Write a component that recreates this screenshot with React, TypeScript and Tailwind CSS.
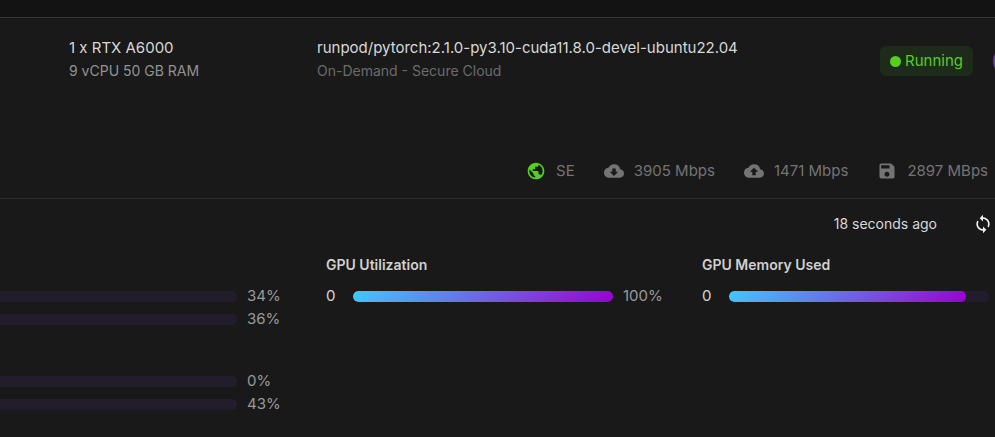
import { ReactNode } from "react";
import { MdCloudDownload, MdCloudUpload, MdPublic, MdSave, MdSync } from "react-icons/md";

const network = [
  { id: "region", label: "SE", icon: <MdPublic className="size-5 text-[#54cf22]" /> },
  { id: "down", label: "3905 Mbps", icon: <MdCloudDownload className="size-5" /> },
  { id: "up", label: "1471 Mbps", icon: <MdCloudUpload className="size-5" /> },
  { id: "disk", label: "2897 MBps", icon: <MdSave className="size-5" /> },
];

const systemUsage = [
  [
    { id: "cpu", label: "34%" },
    { id: "memory", label: "36%" },
  ],
  [
    { id: "disk", label: "0%" },
    { id: "volume", label: "43%" },
  ],
];

function Meter({ value, name }: { value: number; name: string }) {
  return (
    <div
      role="meter"
      aria-label={name}
      aria-valuenow={value}
      aria-valuemin={0}
      aria-valuemax={100}
      className="h-[11px] flex-1 overflow-hidden rounded-[5px] bg-[#221d2b]"
    >
      <div
        className="h-full rounded-[5px] bg-[linear-gradient(135deg,#40c9ff,#9a00cf)]"
        style={{ width: `${value}%` }}
      />
    </div>
  );
}

function GpuMetric({ title, children }: { title: string; children: ReactNode }) {
  return (
    <section>
      <h3 className="text-sm leading-5 font-semibold text-[#d0d0d0]">{title}</h3>
      <div className="mt-[9px] flex h-[25px] items-center">{children}</div>
    </section>
  );
}

export default function App() {
  return (
    <main className="min-h-screen overflow-hidden bg-[#191919] font-['Inter',sans-serif] text-[#d8d8d8]">
      <div className="h-[18px] border-b border-[#333333] bg-[#131313]" />

      <header className="flex h-[86px] items-center">
        <div className="w-[317px] pb-1 pl-[69px]">
          <p className="text-[15px] leading-6">1 x RTX A6000</p>
          <p className="text-sm leading-[22px] text-[#929292]">9 vCPU 50 GB RAM</p>
        </div>
        <div className="flex-1 pb-1">
          <p className="text-[15px] leading-6">runpod/pytorch:2.1.0-py3.10-cuda11.8.0-devel-ubuntu22.04</p>
          <p className="text-sm leading-[22px] text-[#6b6b6b]">On-Demand - Secure Cloud</p>
        </div>
        <span className="flex h-[30px] items-center gap-1 rounded-md bg-[#1f2b1a] px-2.5 text-[#54cf22]">
          <span className="size-[11px] rounded-full bg-[#54cf22]" />
          <span className="text-[15px]">Running</span>
        </span>
        <button
          type="button"
          aria-label="Open pod"
          className="-mr-7 ml-5 size-[30px] rounded-full border-2 border-[#673ab7]"
        />
      </header>

      <ul className="mt-[47px] flex h-12 items-start justify-end gap-[29px] border-b border-[#2d2d2d] pt-2.5 pr-[7px] text-[15px] leading-5 text-[#747474]">
        {network.map((item) => (
          <li key={item.id} className="flex items-center gap-2.5">
            {item.icon}
            {item.label}
          </li>
        ))}
      </ul>

      <div className="flex items-center justify-end gap-9 pt-[15px] pr-0.5">
        <time className="text-sm leading-5">18 seconds ago</time>
        <button type="button" aria-label="Refresh" className="text-[#f0f0f0]">
          <MdSync className="size-5" />
        </button>
      </div>

      <div className="grid grid-cols-[326px_1fr_293px] pt-[21px]">
        <div className="flex flex-col gap-[39px] pt-[30px] pr-[45px]">
          {systemUsage.map((group) => (
            <div key={group[0].id}>
              {group.map((row) => (
                <div key={row.id} className="flex h-[23px] items-center gap-2.5">
                  <div className="h-[11px] flex-1 rounded-r-[5px] bg-[#221d2b]" />
                  <span className="w-[34px] text-[15px] text-[#9a9a9a]">{row.label}</span>
                </div>
              ))}
            </div>
          ))}
        </div>
        <GpuMetric title="GPU Utilization">
          <span className="w-[27px] text-[15px]">0</span>
          <Meter value={100} name="GPU Utilization" />
          <span className="ml-2.5 w-[79px] pr-10 text-[15px] text-[#9a9a9a]">100%</span>
        </GpuMetric>
        <GpuMetric title="GPU Memory Used">
          <span className="w-[27px] text-[15px]">0</span>
          <Meter value={91} name="GPU Memory Used" />
          <span className="w-1.5" />
        </GpuMetric>
      </div>
    </main>
  );
}
